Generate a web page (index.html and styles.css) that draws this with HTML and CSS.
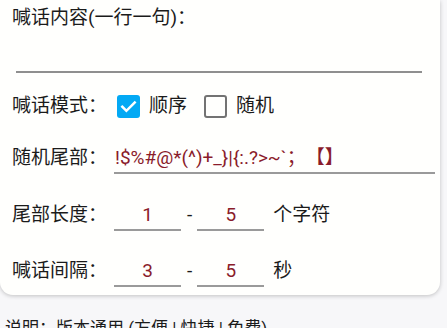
FILE: index.html
```html
<!DOCTYPE html>
<html lang="zh">
<head>
<meta charset="utf-8">
<link rel="stylesheet" href="styles.css">
</head>
<body>
<div class="card">
  <div class="title">喊话内容(一行一句)：</div>
  <div class="textarea"></div>

  <div class="row row-mode">
    <span class="label">喊话模式：</span>
    <span class="cb cb-on"><svg viewBox="0 0 24 24" width="23" height="23"><path d="M5.5 12.2l4.3 4.3 8.7-8.7" fill="none" stroke="#fff" stroke-width="2.6" stroke-linecap="square"/></svg></span>
    <span class="cb-text">顺序</span>
    <span class="cb cb-off"></span>
    <span class="cb-text">随机</span>
  </div>

  <div class="row row-tail">
    <span class="label">随机尾部：</span>
    <div class="input input-wide">!$%#@*(^)+_}|{:.?&gt;~`；【】</div>
  </div>

  <div class="row row-len">
    <span class="label">尾部长度：</span>
    <div class="input input-num">1</div>
    <span class="dash">-</span>
    <div class="input input-num">5</div>
    <span class="unit">个字符</span>
  </div>

  <div class="row row-int">
    <span class="label">喊话间隔：</span>
    <div class="input input-num">3</div>
    <span class="dash">-</span>
    <div class="input input-num">5</div>
    <span class="unit">秒</span>
  </div>
</div>
<div class="footer">说明：版本通用 (方便 | 快捷 | 免费)</div>
</body>
</html>
```

FILE: styles.css
```css
html, body {
  margin: 0;
  padding: 0;
}
body {
  background: #f7f7f9;
  font-family: Roboto, "Noto Sans CJK SC", sans-serif;
  color: #1b1b1b;
  font-size: 19px;
  width: 447px;
  height: 328px;
  overflow: hidden;
  text-spacing-trim: space-all;
}
.card {
  width: 440px;
  box-sizing: border-box;
  background: #fffffd;
  border-radius: 0 0 13px 13px;
  box-shadow: 0 1px 4px rgba(0, 0, 0, 0.22);
  padding: 4px 5px 8px 12px;
}
.title {
  line-height: 28px;
  height: 28px;
}
.textarea {
  height: 39px;
  border-bottom: 2px solid #8f8f8f;
  margin: 0 13px 0 4px;
}
.row {
  display: flex;
  align-items: flex-start;
}
.label {
  width: 102px;
  flex: none;
  line-height: 28px;
  white-space: nowrap;
}
.row-mode {
  margin-top: 19px;
  align-items: center;
  height: 28px;
}
.row-tail { margin-top: 24px; }
.row-len { margin-top: 27px; }
.row-int { margin-top: 26px; }
.cb {
  width: 23px;
  height: 23px;
  box-sizing: border-box;
  border-radius: 3px;
  flex: none;
  display: flex;
}
.cb-on {
  background: #03a9f4;
  margin-left: 3px;
}
.cb-off {
  border: 2px solid #737373;
  margin-left: 17px;
}
.cb-text {
  margin-left: 9px;
  line-height: 28px;
}
.input {
  height: 28px;
  line-height: 28px;
  border-bottom: 2px solid #9a9a9a;
  color: #8a1c2b;
  white-space: nowrap;
}
.input-wide {
  flex: 1;
  padding-left: 1px;
}
.input-num {
  width: 67px;
  text-align: center;
  flex: none;
}
.dash {
  line-height: 28px;
  margin: 0 5px 0 6px;
}
.unit {
  line-height: 28px;
  margin-left: 9px;
}
.footer {
  margin-top: 21px;
  padding-left: 5px;
  line-height: 24px;
  font-size: 17px;
}
```
